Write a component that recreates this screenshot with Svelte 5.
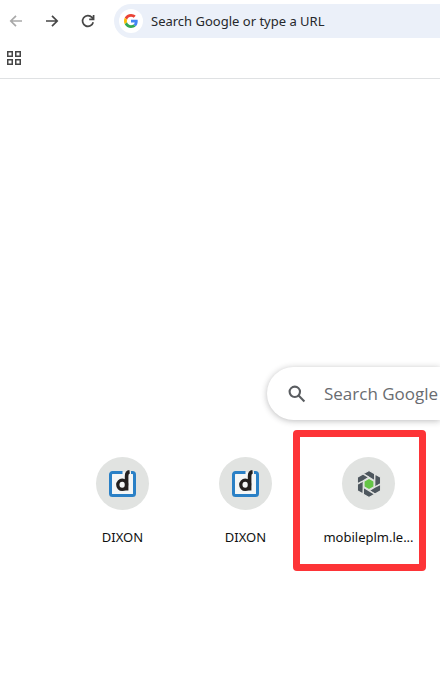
<script>
  const shortcuts = [
    { label: 'DIXON', icon: 'dixon', marked: false },
    { label: 'DIXON', icon: 'dixon', marked: false },
    { label: 'mobileplm.le...', icon: 'plm', marked: true }
  ];
  const blades = [0, 60, 120, 180, 240, 300];
</script>

<div class="browser">
  <header>
    <div class="toolbar">
      <button class="nav disabled" aria-label="Back">
        <svg viewBox="0 0 16 16"><path d="M14 8H3M8 2.8 2.8 8 8 13.2" /></svg>
      </button>
      <button class="nav" aria-label="Forward">
        <svg viewBox="0 0 16 16"><path d="M2 8h11M8 2.8 13.2 8 8 13.2" /></svg>
      </button>
      <button class="nav" aria-label="Reload">
        <svg viewBox="0 0 16 16"><path d="M13.2 9.2A5.4 5.4 0 1 1 12 4.4l1.2 1.4M13.6 2v4.4H9.2" /></svg>
      </button>
      <label class="omnibox">
        <span class="google">
          <svg viewBox="0 0 48 48" aria-hidden="true">
            <path fill="#ea4335" d="M24 9.5c3.54 0 6.71 1.22 9.21 3.6l6.85-6.85C35.9 2.38 30.47 0 24 0 14.62 0 6.51 5.38 2.56 13.22l7.98 6.19C12.43 13.72 17.74 9.5 24 9.5z" />
            <path fill="#4285f4" d="M46.98 24.55c0-1.57-.15-3.09-.38-4.55H24v9.02h12.94c-.58 2.96-2.26 5.48-4.78 7.18l7.73 6c4.51-4.18 7.09-10.36 7.09-17.65z" />
            <path fill="#fbbc05" d="M10.53 28.59c-.48-1.45-.76-2.99-.76-4.59s.27-3.14.76-4.59l-7.98-6.19C.92 16.46 0 20.12 0 24s.92 7.54 2.56 10.78l7.97-6.19z" />
            <path fill="#34a853" d="M24 48c6.48 0 11.93-2.13 15.89-5.81l-7.73-6c-2.15 1.45-4.92 2.3-8.16 2.3-6.26 0-11.57-4.22-13.47-9.91l-7.98 6.19C6.51 42.62 14.62 48 24 48z" />
          </svg>
        </span>
        <input type="text" aria-label="Address" placeholder="Search Google or type a URL" />
      </label>
    </div>
    <div class="bookmarks">
      <button class="apps" aria-label="Apps">
        <svg viewBox="0 0 14 14">
          <path d="M.75.75h4.5v4.5H.75zM8.75.75h4.5v4.5h-4.5zM.75 8.75h4.5v4.5H.75zM8.75 8.75h4.5v4.5h-4.5z" />
        </svg>
      </button>
    </div>
  </header>

  <main>
    <label class="search">
      <svg viewBox="0 0 18 18" aria-hidden="true"><circle cx="6.8" cy="6.8" r="5.2" /><path d="m10.6 10.6 5.8 5.8" /></svg>
      <input type="text" aria-label="Search" placeholder="Search Google" />
    </label>

    <nav class="shortcuts">
      {#each shortcuts as item}
        <a class="tile" class:marked={item.marked} href="#{item.icon}">
          <span class="disc">
            {#if item.icon === 'dixon'}
              <svg viewBox="0 0 28 28" aria-hidden="true">
                <rect x="1.5" y="2" width="24" height="24" rx="2" fill="#f4f6f6" />
                <path d="M13.5 2.5H3.5a2 2 0 0 0-2 2v19a2 2 0 0 0 2 2h20a2 2 0 0 0 2-2v-19a2 2 0 0 0-2-2H22" fill="none" stroke="#2a80c6" stroke-width="3" />
                <path d="M20.6 1.8c-2.4.3-3 1.8-3 4.2v14.5" fill="none" stroke="#24201f" stroke-width="3.6" />
                <ellipse cx="13.2" cy="14.8" rx="4.4" ry="4.6" fill="none" stroke="#24201f" stroke-width="3.3" />
              </svg>
            {:else}
              <svg viewBox="0 0 28 28" aria-hidden="true">
                {#each blades as angle}
                  <path d="M8.2 3.8 14 .5l5.7 3.3v6.9L14 7.4z" fill="#4e575e" stroke="#e1e3e1" stroke-width="1.3" transform="rotate({angle} 14 14)" />
                {/each}
                <path d="m14 9 4.4 2.5v5L14 19l-4.4-2.5v-5z" fill="#65c446" />
              </svg>
            {/if}
          </span>
          <span class="label">{item.label}</span>
        </a>
      {/each}
    </nav>
  </main>
</div>

<style>
  :global(body) {
    background: #fff;
    overflow: hidden;
  }
  .browser {
    font-family: "Noto Sans", "Open Sans", sans-serif;
    color: #1f1f1f;
    overflow: hidden;
    min-height: 100vh;
  }
  button {
    display: flex;
    padding: 0;
    border: 0;
    background: none;
  }
  input {
    flex: 1;
    min-width: 0;
    padding: 0;
    border: 0;
    outline: 0;
    background: none;
    font-family: inherit;
  }
  svg {
    display: block;
    flex: none;
  }
  header {
    border-bottom: 1px solid #dfe1e3;
  }
  .toolbar {
    display: flex;
    align-items: center;
    gap: 20px;
    padding: 4px 0 4px 8px;
  }
  .nav {
    color: #474747;
  }
  .nav.disabled {
    color: #a9a9a9;
  }
  .nav svg {
    width: 16px;
    height: 16px;
    fill: none;
    stroke: currentColor;
    stroke-width: 1.7;
  }
  .omnibox {
    flex: 1;
    display: flex;
    align-items: center;
    gap: 8px;
    height: 34px;
    margin-left: -2px;
    padding-left: 5px;
    border-radius: 17px 0 0 17px;
    background: #ebf0f9;
  }
  .google {
    display: grid;
    place-items: center;
    width: 24px;
    height: 24px;
    border-radius: 50%;
    background: #fff;
  }
  .google svg {
    width: 14px;
    height: 14px;
  }
  .omnibox input {
    font-size: 13px;
    height: 24px;
  }
  .omnibox input::placeholder {
    color: #26282c;
    opacity: 1;
  }
  .bookmarks {
    display: flex;
    padding: 9px 7px 13px;
  }
  .apps svg {
    width: 14px;
    height: 14px;
    fill: none;
    stroke: #454545;
    stroke-width: 1.5;
  }
  main {
    padding-top: 288px;
  }
  .search {
    display: flex;
    align-items: center;
    gap: 18px;
    height: 53px;
    margin-left: 267px;
    padding-left: 21px;
    border-radius: 27px 0 0 27px;
    background: #fff;
    box-shadow: 0 1px 6px rgba(32, 33, 36, 0.3);
  }
  .search svg {
    width: 18px;
    height: 18px;
    fill: none;
    stroke: #5a5d61;
    stroke-width: 2.1;
  }
  .search input {
    font-family: "Open Sans", "Noto Sans", sans-serif;
    font-size: 17px;
    height: 32px;
  }
  .search input::placeholder {
    color: #696c70;
    opacity: 1;
  }
  .shortcuts {
    display: flex;
    padding: 20px 0 0 61px;
  }
  .tile {
    position: relative;
    flex: none;
    display: flex;
    flex-direction: column;
    align-items: center;
    gap: 17px;
    width: 123px;
    padding-top: 17px;
    color: #111;
    text-decoration: none;
  }
  .marked::after {
    content: "";
    position: absolute;
    inset: -10px 4px -24px -14px;
    border: 7px solid #fd3437;
    border-radius: 4px;
  }
  .disc {
    display: grid;
    place-items: center;
    width: 53px;
    height: 53px;
    border-radius: 50%;
    background: #e1e3e1;
  }
  .disc svg {
    width: 28px;
    height: 28px;
  }
  .label {
    font-size: 13px;
    line-height: 20px;
    white-space: nowrap;
  }
</style>
